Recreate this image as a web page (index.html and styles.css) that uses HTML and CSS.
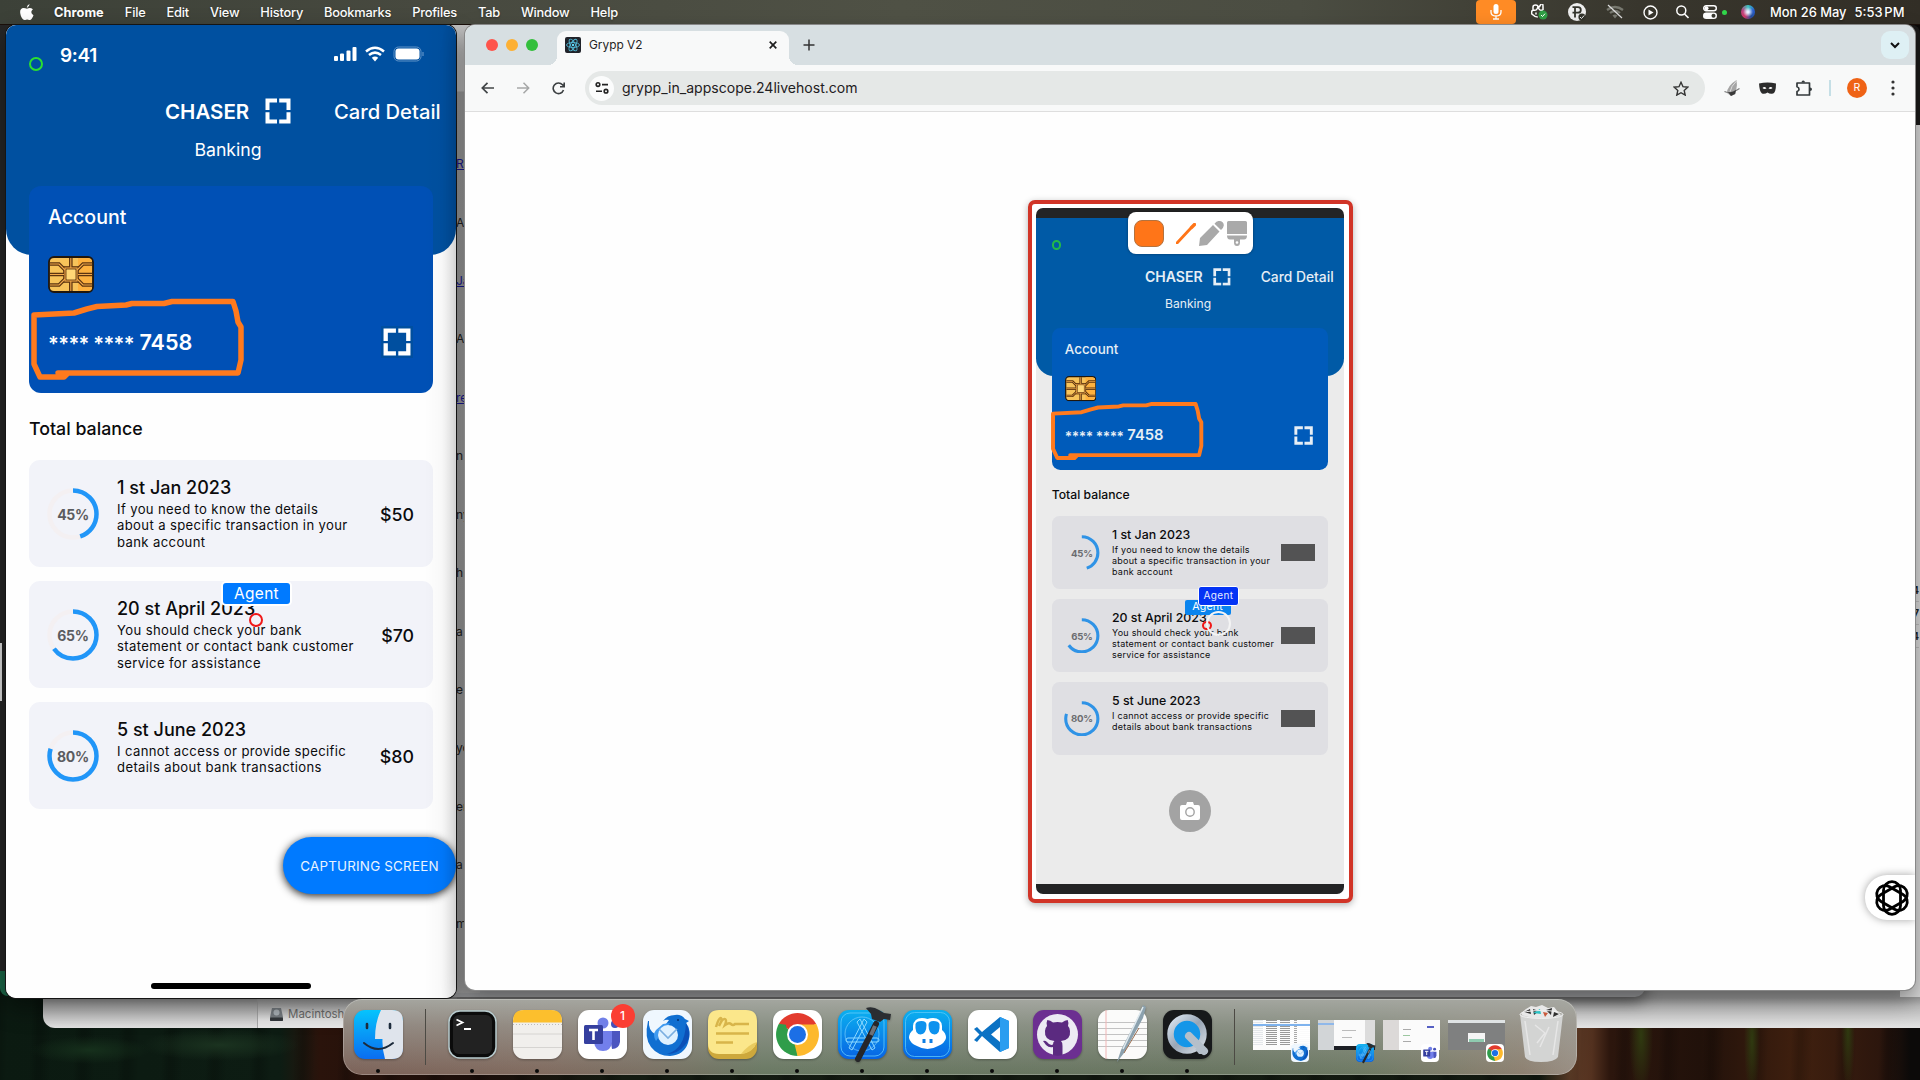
FILE: index.html
```html
<!DOCTYPE html>
<html lang="en">
<head>
<meta charset="utf-8">
<title>Desktop</title>
<link rel="stylesheet" href="styles.css">
</head>
<body>
<svg class="defs" aria-hidden="true">
  <linearGradient id="gFace" x1="0" y1="0" x2="0" y2="1"><stop offset="0" stop-color="#06c4fd"/><stop offset="1" stop-color="#0a6df0"/></linearGradient>
  <linearGradient id="gSteel" x1="0" y1="0" x2="1" y2="1"><stop offset="0" stop-color="#dde7f2"/><stop offset=".5" stop-color="#98a5b5"/><stop offset="1" stop-color="#d5dce4"/></linearGradient>
  <linearGradient id="gBlue" x1="0" y1="0" x2="0" y2="1"><stop offset="0" stop-color="#0bb0ef"/><stop offset="1" stop-color="#0763e4"/></linearGradient>
  <symbol id="brackets" viewBox="0 0 26 26"><path d="M2.500 12V2.500H12M14.200 2.500h9.300V12M23.500 14.200v9.300H14.200M12 23.500H2.500V14.200" fill="none" stroke="currentColor" stroke-width="4"/></symbol>
  <symbol id="chip" viewBox="0 0 46 37">
    <rect x="1" y="1" width="44" height="35" rx="5" fill="#f7c35a" stroke="#20160c" stroke-width="1.800"/>
    <path d="M30 2h10q4 1 4 4v25q0 4-4 4H30z" fill="#fdb13f"/>
    <g fill="none" stroke="#5c3410" stroke-width="3.600"><path d="M22.800 2v10M22.800 25v10M2 8h9l6 6M44 8h-9l-6 6M2 18.500h14M44 18.500H30M2 29h9l6-6M44 29h-9l-6-6"/><rect x="17" y="12" width="12" height="13"/></g>
    <g fill="none" stroke="#f2a94a" stroke-width="1.100"><path d="M22.800 2v10M22.800 25v10M2 8h9l6 6M44 8h-9l-6 6M2 18.500h14M44 18.500H30M2 29h9l6-6M44 29h-9l-6-6"/><rect x="17" y="12" width="12" height="13"/></g>
    <rect x="18.500" y="13.500" width="9" height="10" fill="#ffd777"/>
  </symbol>
  <symbol id="scribble" viewBox="0 0 207 74"><path d="M0 12L40 10L53 6L63 3.500L92 2L98 0.500L130 0.500L138-1.500L199-1.500L202 8L204 19L207 24V57L204 70H24L33 71L30 74H6L0 61Z" fill="none" stroke="#ff7a1d" stroke-width="5.500" stroke-linejoin="round"/></symbol>
  <symbol id="xcode" viewBox="0 0 49 49">
    <rect width="49" height="49" rx="11" fill="url(#gBlue)"/><rect x="3" y="3" width="43" height="43" rx="9" fill="none" stroke="#63cbfb" stroke-width=".8"/>
    <g fill="none" stroke="#8bd8ff" stroke-width="1"><circle cx="24" cy="24" r="17" stroke-width=".6"/><path d="M26 9l-15 29 3 2 15-28zM22 9l15 29-3 2-15-28z"/><rect x="8" y="28" width="33" height="4" rx="2"/></g>
    <path d="M38 14L20 49" stroke="#252629" stroke-width="6" stroke-linecap="round"/><path d="M37 16l-4 9" stroke="#6d7278" stroke-width="4"/>
    <path d="M28-2q7-2 13 2l5 3 7 1-1 6-6-1-4 3-8-3-1-5z" fill="#2a2d31"/>
  </symbol>
  <symbol id="bird" viewBox="0 0 49 49">
    <rect width="49" height="49" rx="11" fill="#eff7fe"/>
    <path d="M5 11q-4 17 3 26t19 9q14-1 18-13 4-13-2-20l3-2-4-2q-4-5-10-4-8 0-12 6 3-2 6-1l-6 8-8 6q-7-4-6-13z" fill="#106fd1"/>
    <path d="M20 14l7-1-5 7q-5 4-9 11-4-6 0-11z" fill="#3f9af0"/><path d="M43 13q7 13-1 22-7 9-18 9 18-5 19-31z" fill="#0b50b7"/>
    <circle cx="25" cy="25" r="10" fill="#dff1ff"/><path d="M16 19l9 9 9-9" fill="none" stroke="#7aaee0" stroke-width="1.600"/>
    <circle cx="35" cy="10" r="1" fill="#012c6b"/>
  </symbol>
  <symbol id="teams" viewBox="0 0 49 49">
    <rect width="49" height="49" rx="11" fill="#fff"/><circle cx="25" cy="13" r="5.500" fill="#7180e8"/><circle cx="37" cy="14" r="4" fill="#4650b8"/>
    <path d="M31 21h11v11q-1 7-8 7z" fill="#4c56c0"/><path d="M17 21h17v11q-1 9-9 9t-9-9z" fill="#727feb"/>
    <rect x="6" y="15" width="19" height="19" rx="1.500" fill="#353f9f"/><path d="M11 20h9M15.500 20v10" stroke="#fff" stroke-width="2.600"/>
  </symbol>
  <symbol id="chrome" viewBox="0 0 49 49">
    <rect width="49" height="49" rx="11" fill="#fff"/>
    <path d="M24.500 24.500L5.900 13.800A21.500 21.500 0 0 1 43.100 13.800z" fill="#e33b2e"/><path d="M24.500 24.500L43.100 13.800A21.500 21.500 0 0 1 24.500 46z" fill="#fdb92c"/><path d="M24.500 24.500L24.500 46A21.500 21.500 0 0 1 5.900 13.800z" fill="#2f9d4a"/>
    <path d="M24.500 14.500H43.500L33.200 29.500zM33.200 29.500L24.500 46l-3-12z" fill="#fdb92c"/><path d="M15.800 29.500L5.900 13.800l7 1z" fill="#2f9d4a"/>
    <circle cx="24.500" cy="24.500" r="10.500" fill="#fff"/><circle cx="24.500" cy="24.500" r="8.500" fill="#1c6fe6"/>
  </symbol>
</svg>

<div class="desktop">
  <div class="wallpaper"></div>

  <div class="back back-finder"><div class="pathbar"><svg width="13" height="13" viewBox="0 0 13 13"><path d="M2 0h9l2 9v4H0V9z" fill="#7b8186"/><rect y="9.500" width="13" height="3.500" rx="1" fill="#34383c"/><circle cx="6.500" cy="4.500" r="3" fill="#b4bcc1"/></svg><span>Macintosh</span></div></div>
  <div class="back back-gray"></div>
  <div class="back back-left"></div>
  <div class="back back-sliver"></div>
  <div class="back back-mid">
    <span class="lnk">Ri</span><span>Ar</span><span class="lnk">Ja</span><span>Ar</span><span class="lnk">re</span><span>n</span><span>ny</span><span>h</span><span>a</span><span>e</span><span>yo</span><span>er</span><span>a</span><span>m</span>
  </div>
  <div class="back back-right"><span>4</span><span>7</span><span>4</span></div>
  <div class="back back-dark"></div>

  <header class="menubar">
    <svg class="apple" width="14" height="17" viewBox="0 0 14 17"><path d="M9.500 0q.2 2.500-2.600 3.900Q6.700 1.300 9.500 0zM7 4.800q3-1.800 5.900.4-3.500 3 .6 6.100-2 5.500-4.300 4.600-2.200-1-4 0Q2.800 16.500.9 12-1.500 4.500 3.600 4q1.500 0 3.400.8z" fill="#fff"/></svg>
    <nav class="menus"><b>Chrome</b><span>File</span><span>Edit</span><span>View</span><span>History</span><span>Bookmarks</span><span>Profiles</span><span>Tab</span><span>Window</span><span>Help</span></nav>
    <div class="tray">
      <div class="mic"><svg width="12" height="16" viewBox="0 0 12 16"><rect x="3.500" y="0" width="5" height="10" rx="2.500" fill="#fff"/><path d="M1 6v2q0 4 5 4t5-4V6M6 12v3M3 15h6" fill="none" stroke="#fff" stroke-width="1.300"/></svg></div>
      <svg class="t1" width="17" height="16" viewBox="0 0 17 16"><path d="M2 6V3q0-2 2.500-2T7 3t2.500-2T12 3v3M2 6Q0 7 .8 10q3 3 6 3M2 6q3 1 4-1l1-2 1 2q1 2 4 1M5 8.500v2" fill="none" stroke="#fff" stroke-width="1.500"/><circle cx="12" cy="11" r="4.500" fill="#2f9e44"/><path d="M10 11l1.500 1.500L14 9.700" stroke="#fff" fill="none"/></svg>
      <svg class="t2" width="18" height="18" viewBox="0 0 18 18"><circle cx="9" cy="9" r="9" fill="#eee"/><path d="M7 14.500V4.200h3q2.800 0 2.800 2.700T10 9.600H4.500M4.500 4.200H7" fill="none" stroke="#33342c" stroke-width="1.800"/><circle cx="14" cy="14" r="3.600" fill="#33342c"/><path d="M12 14l1.500 1.500 2.700-3" stroke="#eee" fill="none"/></svg>
      <svg class="t3" width="18" height="16" viewBox="0 0 18 16"><path d="M1 6q8-6 16 0M4 9q5-4 10 0" fill="none" stroke="#77786f" stroke-width="2.200"/><path d="M6.500 11.500q2.500-2 5 0L9 14.500z" fill="#77786f"/><path d="M2 1l14 13" stroke="#ddd" stroke-width="1.200"/></svg>
      <svg class="t4" width="15" height="15" viewBox="0 0 15 15"><circle cx="7.500" cy="7.500" r="6.500" fill="none" stroke="#fff" stroke-width="1.400"/><path d="M5.500 4.500v6l5-3z" fill="#fff"/></svg>
      <svg class="t5" width="13" height="14" viewBox="0 0 13 14"><circle cx="5.300" cy="5.500" r="4.500" fill="none" stroke="#fff" stroke-width="1.500"/><path d="M8.500 9l4 4" stroke="#fff" stroke-width="1.600"/></svg>
      <svg class="t6" width="14" height="14" viewBox="0 0 14 14"><rect x=".7" y=".7" width="12.600" height="5" rx="2.500" fill="none" stroke="#fff" stroke-width="1.400"/><circle cx="3.500" cy="3.200" r="2" fill="#fff"/><rect y="7.500" width="14" height="6.500" rx="3.200" fill="#fff"/><circle cx="10.500" cy="10.800" r="2" fill="#3a3a31"/></svg>
      <i class="live"></i><i class="siri"></i>
      <span class="clock">Mon 26 May<em>5:53<small>&#8201;</small>PM</em></span>
    </div>
  </header>

  <section class="win phone">
    <div class="app">
      <div class="hero">
        <div class="status"><i class="greenring"></i><b>9:41</b>
          <svg width="90" height="17" viewBox="0 0 90 17"><g fill="#fff"><rect x="0" y="10" width="4" height="5" rx="1"/><rect x="6" y="7.500" width="4" height="7.500" rx="1"/><rect x="12.500" y="4.500" width="4" height="10.500" rx="1"/><rect x="18.500" y="1" width="4" height="14" rx="1"/><path d="M41 15.500l-3.200-3.800q3.200-2.600 6.400 0z"/></g><path d="M32 5.500q9-7.500 18 0M35 9q6-4.800 12 0" fill="none" stroke="#fff" stroke-width="2.500"/><rect x="60" y="1" width="27" height="14" rx="4.500" fill="none" stroke="#5f93c8" stroke-width="1"/><rect x="61.500" y="2.500" width="24" height="11" rx="3" fill="#fff"/><path d="M89 6v4" stroke="#5f93c8" stroke-width="1.200"/></svg>
        </div>
        <div class="titlebar"><b>CHASER</b><svg class="br"><use href="#brackets"/></svg><span>Card Detail</span></div>
        <div class="sub">Banking</div>
      </div>
      <div class="account">
        <div class="acc">Account</div>
        <svg class="chip"><use href="#chip"/></svg>
        <div class="num"><b><u>**** ****</u> 7458</b><span class="brbox"><svg><use href="#brackets"/></svg></span></div>
      </div>
      <h2>Total balance</h2>
      <div class="tx"><div class="ring"><svg viewBox="0 0 52 52"><circle class="trk" cx="26" cy="26" r="23.500"/><circle class="arc" cx="26" cy="26" r="23.500" pathLength="100" stroke-dasharray="45 100"/></svg><span>45%</span></div><div class="txt"><h3>1 st Jan 2023</h3><p>If you need to know the details<br>about a specific transaction in your<br>bank account</p></div><div class="amt">$50</div></div>
      <div class="tx"><div class="ring"><svg viewBox="0 0 52 52"><circle class="trk" cx="26" cy="26" r="23.500"/><circle class="arc" cx="26" cy="26" r="23.500" pathLength="100" stroke-dasharray="65 100"/></svg><span>65%</span></div><div class="txt"><h3>20 st April 2023</h3><p>You should check your bank<br>statement or contact bank customer<br>service for assistance</p></div><div class="amt">$70</div></div>
      <div class="tx"><div class="ring"><svg viewBox="0 0 52 52"><circle class="trk" cx="26" cy="26" r="23.500"/><circle class="arc" cx="26" cy="26" r="23.500" pathLength="100" stroke-dasharray="80 100"/></svg><span>80%</span></div><div class="txt"><h3>5 st June 2023</h3><p>I cannot access or provide specific<br>details about bank transactions</p></div><div class="amt">$80</div></div>
      <svg class="scribble"><use href="#scribble"/></svg>
      <div class="agent">Agent</div><i class="redring"></i>
      <button class="capture">CAPTURING SCREEN</button>
      <i class="home"></i>
    </div>
    <i class="shade"></i>
  </section>

  <section class="win browser">
    <div class="tabs">
      <div class="lights"><i></i><i></i><i></i></div>
      <div class="tab">
        <svg width="16" height="16" viewBox="0 0 16 16"><rect width="16" height="16" rx="2" fill="#20232a"/><g fill="none" stroke="#53b9d6" stroke-width=".9"><ellipse cx="8" cy="8" rx="6.500" ry="2.500"/><ellipse cx="8" cy="8" rx="6.500" ry="2.500" transform="rotate(60 8 8)"/><ellipse cx="8" cy="8" rx="6.500" ry="2.500" transform="rotate(120 8 8)"/></g><circle cx="8" cy="8" r="1.200" fill="#61dafb"/></svg>
        <span>Grypp V2</span>
        <svg class="x" width="8" height="8" viewBox="0 0 8 8"><path d="M.7.7l6.600 6.600M7.300.7L.7 7.300" stroke="#1f1f1f" stroke-width="1.700"/></svg>
      </div>
      <svg class="plus" width="12" height="12" viewBox="0 0 12 12"><path d="M6 .5v11M.5 6h11" stroke="#333" stroke-width="1.500"/></svg>
      <div class="chev"><svg width="10" height="7" viewBox="0 0 10 7"><path d="M1 1l4 4 4-4" fill="none" stroke="#111" stroke-width="2"/></svg></div>
    </div>
    <div class="tools">
      <svg class="back-b" width="13" height="12" viewBox="0 0 13 12"><path d="M6.500.8L1.300 6l5.200 5.200M1.300 6H13" fill="none" stroke="#414547" stroke-width="1.700"/></svg>
      <svg class="fwd" width="13" height="12" viewBox="0 0 13 12"><path d="M6.500.8L11.700 6l-5.200 5.200M11.700 6H0" fill="none" stroke="#a6a8a8" stroke-width="1.500"/></svg>
      <svg class="rel" width="13" height="13" viewBox="0 0 13 13"><path d="M11.500 8A5.300 5.300 0 1 1 10.500 2.800L12 4.500M12.200.5v4.300H8" fill="none" stroke="#3b3f41" stroke-width="1.600"/></svg>
      <div class="omni"><i><svg width="14" height="12" viewBox="0 0 14 12"><g fill="none" stroke="#222" stroke-width="1.600"><circle cx="3" cy="2.600" r="1.800"/><path d="M7 2.600h6M1 9.200h6"/><circle cx="11" cy="9.200" r="1.800"/></g></svg></i><span>grypp_in_appscope.24livehost.com</span>
        <svg class="star" width="16" height="15" viewBox="0 0 16 15"><path d="M8 1.300l2 4.400 4.800.5-3.600 3.200 1 4.700L8 11.700 3.800 14.100l1-4.700L1.200 6.200 6 5.700z" fill="none" stroke="#333" stroke-width="1.400"/></svg></div>
      <svg class="e1" width="16" height="16" viewBox="0 0 16 16"><path d="M12.500 0q.8 5 0 8l-1 6-4.500 2-4-3Q3 6 12.500 0z" fill="#a5a5a5"/><path d="M12.500 1Q7 6 6 12" stroke="#ddd" fill="none"/><path d="M.5 11.500q6 3 15-3" stroke="#777" stroke-width="1.200" fill="none"/><path d="M4 12q4 1 8-2l-1 4-4 2z" fill="#3a3a3a"/></svg>
      <svg class="e2" width="17" height="12" viewBox="0 0 17 12"><path d="M0 1.500q8.500-2 17 0 0 9-3 10-3 .800-5.500-1-2.500 1.800-5.500 1Q.5 10 0 1.500z" fill="#2c2c2c"/><path d="M3.500 6q2-2 4 .5-2.500 1-4-.5zM13.500 6q-2-2-4 .5 2.500 1 4-.5z" fill="#fff"/></svg>
      <svg class="e3" width="16" height="17" viewBox="0 0 16 17"><path d="M1 3h12.500v12H1v-3.500q2-.5 2-2.300T1 6.800z" fill="none" stroke="#33393b" stroke-width="1.700" stroke-linejoin="round"/><path d="M5.500 2.500q0-2 1.700-2t1.800 2zM14 7.500q2 0 2 1.700t-2 1.800z" fill="#33393b"/></svg>
      <i class="vsep"></i><div class="avatar">R</div>
      <svg class="dots" width="4" height="16" viewBox="0 0 4 16" fill="#333"><circle cx="2" cy="2" r="1.600"/><circle cx="2" cy="8" r="1.600"/><circle cx="2" cy="14" r="1.600"/></svg>
    </div>
    <div class="page">
      <div class="frame"><div class="screen">
        <div class="app mirror">
          <div class="hero">
            <div class="status"><i class="greenring"></i></div>
            <div class="titlebar"><b>CHASER</b><svg class="br"><use href="#brackets"/></svg><span>Card Detail</span></div>
            <div class="sub">Banking</div>
          </div>
          <div class="account">
            <div class="acc">Account</div>
            <svg class="chip"><use href="#chip"/></svg>
            <div class="num"><b><u>**** ****</u> 7458</b><span class="brbox"><svg><use href="#brackets"/></svg></span></div>
          </div>
          <h2>Total balance</h2>
          <div class="tx"><div class="ring"><svg viewBox="0 0 52 52"><circle class="arc" cx="26" cy="26" r="23.500" pathLength="100" stroke-dasharray="45 100"/></svg><span>45%</span></div><div class="txt"><h3>1 st Jan 2023</h3><p>If you need to know the details<br>about a specific transaction in your<br>bank account</p></div><div class="mask"></div></div>
          <div class="tx"><div class="ring"><svg viewBox="0 0 52 52"><circle class="arc" cx="26" cy="26" r="23.500" pathLength="100" stroke-dasharray="65 100"/></svg><span>65%</span></div><div class="txt"><h3>20 st April 2023</h3><p>You should check your bank<br>statement or contact bank customer<br>service for assistance</p></div><div class="mask"></div></div>
          <div class="tx"><div class="ring"><svg viewBox="0 0 52 52"><circle class="arc" cx="26" cy="26" r="23.500" pathLength="100" stroke-dasharray="80 100"/></svg><span>80%</span></div><div class="txt"><h3>5 st June 2023</h3><p>I cannot access or provide specific<br>details about bank transactions</p></div><div class="mask"></div></div>
          <svg class="scribble"><use href="#scribble"/></svg>
          <div class="agent">Agent</div><i class="redring"></i>
        </div>
        <div class="draw">
          <i class="swatch"></i>
          <svg width="20" height="21" viewBox="0 0 20 21"><path d="M1 20L14.500 5.500" stroke="#ff7518" stroke-width="2.800" stroke-linecap="round"/><path d="M15.500 4.500l3-3" stroke="#ff7518" stroke-width="3.400" stroke-linecap="round"/></svg>
          <svg width="25" height="25" viewBox="0 0 25 25"><path d="M0 25l1-8L14 4l6.500 6.500L8 24zM15.500 2.700Q18-.5 21 0q4 1 3.800 4.500-.3 2.500-2.800 4.500z" fill="#a9a9a9"/></svg>
          <svg width="20" height="25" viewBox="0 0 20 25"><path d="M1.500 0h17q1.500 0 1.500 1.500V13H0V1.500Q0 0 1.500 0zM0 14.500h20q0 4-3 4h-4v3q0 3.500-3 3.500t-3-3.500v-3H3q-3 0-3-4z" fill="#a9a9a9"/><circle cx="10" cy="21.500" r="1.300" fill="#fff"/></svg>
        </div>
        <i class="cursor"></i><div class="tag">Agent</div>
        <div class="camera"><svg width="20" height="18" viewBox="0 0 20 18"><path d="M2 3h4l1-3h6l1 3h4q2 0 2 2v11q0 2-2 2H2q-2 0-2-2V5q0-2 2-2z" fill="#fff"/><circle cx="10" cy="10" r="4.200" fill="none" stroke="#a3a3a3" stroke-width="1.400"/></svg></div>
      </div></div>
      <div class="widget"><svg width="36" height="36" viewBox="-18 -18 36 36" fill="none" stroke="#000" stroke-width="2.800"><rect x="-8.500" y="-16.300" width="17" height="32.600" rx="8.500"/><rect x="-8.500" y="-16.300" width="17" height="32.600" rx="8.500" transform="rotate(60)"/><rect x="-8.500" y="-16.300" width="17" height="32.600" rx="8.500" transform="rotate(120)"/></svg></div>
    </div>
  </section>

  <footer class="dock">
    <div class="slot"><svg viewBox="0 0 49 49"><rect width="49" height="49" rx="11" fill="url(#gFace)"/><path d="M27 0h11q11 0 11 11v27q0 11-11 11h-7q-3-10-2.500-20H21Q21 12 27 0z" fill="#dfe4ec"/><path d="M13 14v4M36 14v4" stroke="#1d2b3c" stroke-width="2.600" stroke-linecap="round"/><path d="M10 33q14 12 29 0" fill="none" stroke="#1d2b3c" stroke-width="2" stroke-linecap="round"/></svg></div>
    <i class="dsep"></i>
    <div class="slot"><svg viewBox="0 0 49 49"><rect x="1" y="1" width="47" height="47" rx="11" fill="#0b0b0b" stroke="#b9cdd0" stroke-width="1.500"/><rect x="5" y="5" width="39" height="39" rx="6" fill="#222"/><path d="M8.500 9.500l6 3-6 3M16 19h7" fill="none" stroke="#fff" stroke-width="1.800"/></svg></div>
    <div class="slot"><svg viewBox="0 0 49 49"><rect width="49" height="49" rx="11" fill="#f1efec"/><path d="M0 12.500V11Q0 0 11 0h27q11 0 11 11v1.500z" fill="#fcbf2d"/><path d="M0 24h49M0 37.500h49" stroke="#d6d4d1"/><path d="M0 14.500h49" stroke="#bbb" stroke-dasharray="1 2"/></svg></div>
    <div class="slot"><svg viewBox="0 0 49 49"><use href="#teams"/></svg><b class="badge">1</b></div>
    <div class="slot"><svg viewBox="0 0 49 49"><use href="#bird"/></svg></div>
    <div class="slot"><svg viewBox="0 0 49 49"><rect y="1" width="49" height="48" rx="11" fill="#cda83c"/><path d="M0 11Q0 0 11 0h27q11 0 11 11v21q-4 10-16 12H11Q0 44 0 33z" fill="#fbe78b"/><path d="M49 32q-8 2-16 12 12-1 16-12z" fill="#e9cb5f"/><path d="M8 17q3-10 5-9t-2 8q4-8 6-7t0 6q4-3 6-1t4 0h14M8 23.500h33M8 32.500h17" fill="none" stroke="#d8b54a" stroke-width="2.500"/></svg></div>
    <div class="slot"><svg viewBox="0 0 49 49"><use href="#chrome"/></svg></div>
    <div class="slot"><svg viewBox="0 0 49 49"><use href="#xcode"/></svg></div>
    <div class="slot"><svg viewBox="0 0 49 49"><rect width="49" height="49" rx="11" fill="url(#gBlue)"/><rect x="2.500" y="2.500" width="44" height="44" rx="9" fill="none" stroke="#5cc8f8" stroke-width=".8"/><path d="M10 20v-4q1-8 9-8 3 0 5.500 1Q27 8 30 8q8 0 9 8v4q4 3 4 8-1 5-8 8-5 3-10.500 3T14 36q-7-3-8-8 0-5 4-8z" fill="#fff"/><path d="M12.500 14q1-3 6-3 5 0 5 4 0 9-6 9.500-6-.5-5-10.500zM36.500 14q-1-3-6-3-5 0-5 4 0 9 6 9.500 6-.5 5-10.500z" fill="#0d92ee"/><path d="M21 29v4M28 29v4" stroke="#0e7ee4" stroke-width="3"/></svg></div>
    <div class="slot"><svg viewBox="0 0 49 49"><rect width="49" height="49" rx="11" fill="#fff"/><path d="M32 7l9 4v27l-9 4L14 26l-5 6-3-2 5.500-5.500L6 19l3-2 5 5z" fill="#0b72c4"/><path d="M32 7l9 4v27l-9 4z" fill="#2a9df0"/><path d="M32 17v15l-9-7.500z" fill="#fff"/></svg></div>
    <div class="slot"><svg viewBox="0 0 49 49"><rect width="49" height="49" rx="11" fill="#6c2f91"/><circle cx="24.500" cy="24.500" r="20.500" fill="#eceaf3"/><path d="M20 45v-8q-4 1-7-2l-3-4q2-1 4 1 3 4 6 2.500 0-3 1.500-3.500Q11 30 12 21q0-3 2-5-1-3 .3-6 3 0 5.700 2.500 4.500-1 9 0Q32 10 34.700 10q1.300 3 .3 6 2 2 2 5 1 9-9 10 2 2 1.500 5v9q-5 1.500-9.500 0z" fill="#5b2a80"/></svg></div>
    <div class="slot"><svg viewBox="0 0 49 49"><rect width="49" height="49" rx="11" fill="#fbfbfa"/><path d="M0 12.500h49M0 18.500h49M0 24.500h49M0 30.500h49M0 36.500h49" stroke="#c3c3c3"/><path d="M8 0v49" stroke="#f0b5b5"/><path d="M45-5l3 2-3 11L26 43l-7 9 4-12L41 5z" fill="#8ba1ae"/><path d="M45-3L25 39" stroke="#dfe9ee" stroke-width="1.500"/><path d="M41 18L26 43" stroke="#9b6f51"/></svg></div>
    <div class="slot"><svg viewBox="0 0 49 49"><rect width="49" height="49" rx="11" fill="#17191b"/><circle cx="24" cy="24" r="16.500" fill="#1596e8" stroke="url(#gSteel)" stroke-width="6.500"/><path d="M26 26l15 15" stroke="#b5bfca" stroke-width="8" stroke-linecap="round"/><path d="M32 39h12v5H36z" fill="#b5bfca"/></svg></div>
    <i class="dsep"></i>
    <div class="thumbs">
      <div class="thumb mail"><svg viewBox="0 0 49 49"><use href="#bird"/></svg></div>
      <div class="thumb code"><svg viewBox="0 0 49 49"><use href="#xcode"/></svg></div>
      <div class="thumb chat"><svg viewBox="0 0 49 49"><use href="#teams"/></svg></div>
      <div class="thumb web"><svg viewBox="0 0 49 49"><use href="#chrome"/></svg></div>
    </div>
    <svg class="trash" width="45" height="57" viewBox="0 0 45 57"><path d="M2 8l5-4 5-3 5 1 6-2 6 3 6-1 4 5 3 3-5 5H6z" fill="#e8e8e8"/><path d="M5 7l6-3 1 5zM14 4l6 2-5 4zM27 5l6-2-1 7zM35 7l5 2-6 3z" fill="#303030"/><path d="M14 8l7-4 1 5z" fill="#2cc3c5"/><path d="M24 7l5 1-3 4z" fill="#c95a3c"/><path d="M1 9q21 9 43 0l-5 43q-3 5-17 5T6 52z" fill="#d3d4d3"/><path d="M6 16l5 34M39 16l-5 34M16 20l10 8-8 10M30 22l-9 20" stroke="#e6e6e6" fill="none" stroke-width="1.500"/><ellipse cx="22.500" cy="9.500" rx="21.500" ry="4" fill="none" stroke="#efefef"/></svg>
  </footer>
</div>
</body>
</html>
```
FILE: styles.css
```css
* { box-sizing: border-box; margin: 0; padding: 0; }
body { width: 1920px; height: 1080px; overflow: hidden; font-family: Inter, "Liberation Sans", sans-serif; }
i, em, u { font-style: normal; text-decoration: none; }
svg { display: block; flex: none; }
.defs { position: absolute; width: 0; height: 0; }
.desktop { position: relative; width: 1920px; height: 1080px; overflow: hidden; background: #14100c; }
.wallpaper {
  position: absolute; inset: 0;
  background:
    radial-gradient(ellipse 60px 14px at 90px 1050px, #16301c, transparent),
    radial-gradient(ellipse 80px 16px at 220px 1045px, #1b3320, transparent),
    radial-gradient(ellipse 12px 60px at 1641px 1035px, #2f3a10, transparent),
    radial-gradient(ellipse 8px 60px at 1752px 1040px, #2f3a10, transparent),
    radial-gradient(ellipse 7px 60px at 1848px 1030px, #2f3a10, transparent),
    repeating-linear-gradient(92deg, transparent 0 22px, rgba(0,0,0,.2) 30px 33px, transparent 44px),
    linear-gradient(90deg, #0b1a11 0, #0d1c13 280px, #2a130b 320px, #1b0e0a 480px, #141b12 620px, #121910 1540px, #6d432b 1580px, #2c160d 1610px, #21110a 1700px, #40200f 1800px, #2c160d 1880px, #0c0a09 1910px);
}

/* windows stacked behind the two front ones */
.back { position: absolute; }
.back-finder { left: 43px; top: 990px; width: 1877px; height: 38px; border-radius: 0 0 0 12px; background: linear-gradient(#9b9b9b 8px, #b9b9b9 16px, #e3e3e3); overflow: hidden; display: flex; padding-left: 214px; }
.pathbar { border-left: 1px solid #aaa; width: 200px; display: flex; align-items: center; gap: 5px; padding: 10px 0 0 12px; font-size: 11.500px; color: #6e6e6e; background: linear-gradient(#aaa 10px, #e9e9e9 30px); }
.back-gray { left: 440px; top: 900px; width: 1205px; height: 97px; border-radius: 0 0 10px 10px; background: #9a9b9d; box-shadow: 0 4px 16px rgba(0,0,0,.5); }
.back-left { left: 0; top: 25px; width: 20px; height: 971px; background: linear-gradient(#262626 946px, #1b6647 946px); border-radius: 0 0 0 8px; }
.back-sliver { left: 0; top: 643px; width: 2px; height: 58px; background: #ddd; }
.back-mid { left: 440px; top: 25px; width: 40px; height: 968px; background: linear-gradient(#c4c4c4 66px, #a5a5a5 67px, #aaa 400px, #a2a2a2); font-size: 12px; color: #222; display: flex; flex-direction: column; justify-content: space-around; padding: 110px 0 40px 16px; line-height: 20px; }
.back-mid .lnk { color: #1a1a9c; text-decoration: underline; }
.back-right { left: 1900px; top: 125px; width: 20px; height: 872px; background: #d8d8d8; padding: 454px 1px 0 0; text-align: right; font: bold 10px/23px Inter, sans-serif; color: #222; }
.back-right span { display: block; border-bottom: 1px solid #bbb; height: 23px; }
.back-dark { left: 1890px; top: 25px; width: 30px; height: 100px; background: #1b1a19; border-top-right-radius: 8px; }

.menubar { position: absolute; inset: 0 0 auto 0; height: 24px; display: flex; align-items: center; background: linear-gradient(90deg, #3c4138, #47493f 420px, #4f5145 900px, #4b4d42 1300px, #38362d 1640px, #322e26); color: #fff; padding-left: 20px; font-size: 12.800px; font-weight: 500; text-shadow: 0 1px 2px rgba(0,0,0,.4); box-shadow: 0 1px 0 #1a0f0a; }
.apple { margin-right: 20px; }
.menus { display: flex; gap: 21px; letter-spacing: -.2px; white-space: nowrap; }
.menus b { font-weight: 700; letter-spacing: .05px; }
.tray { margin-left: auto; width: 444px; height: 24px; display: flex; align-items: center; }
.mic { width: 40px; height: 24px; background: #ff8b25; border-radius: 4px; display: grid; place-items: center; margin-right: 15px; }
.t1 { margin-right: 20px; } .t2 { margin-right: 20px; } .t3 { margin-right: 19px; } .t4 { margin-right: 18px; } .t5 { margin-right: 14px; } .t6 { margin-right: 5px; }
.live { width: 5px; height: 5px; border-radius: 50%; background: #32d74b; margin-right: 14px; }
.siri { width: 14px; height: 14px; border-radius: 50%; background: radial-gradient(circle, #e8f0ff 1px, transparent 5px), conic-gradient(#3cc6c0, #2a5fd0, #2450a0, #d33a6c, #b7447f, #3cc6c0); margin-right: 15px; }
.clock { display: flex; gap: 8px; white-space: nowrap; font-size: 12.900px; }

.win { position: absolute; overflow: hidden; }
.phone { left: 6px; top: 25px; width: 450px; height: 973px; border-radius: 10px; background: #fefefe; box-shadow: 0 0 0 1px #151515, 0 10px 24px rgba(0,0,0,.45); }
.shade { position: absolute; inset: 0; pointer-events: none; background: linear-gradient(90deg, transparent 418px, rgba(0,0,0,.025) 436px, rgba(0,0,0,.1)); }

/* banking app, laid out at 450px wide; the mirrored copy is zoomed */
.app { position: relative; width: 450px; height: 973px; overflow: hidden; background: #fefefe; color: #0b0b0d; }
.hero { height: 230px; background: #0050a0; border-radius: 0 0 26px 26px; color: #fff; padding-top: 17px; }
.status { height: 26px; display: flex; align-items: center; padding-left: 23px; font-size: 19px; }
.status b { font-weight: 600; margin-left: 17px; width: 274px; letter-spacing: -.3px; }
.status svg { margin-top: -2px; }
.greenring { width: 14px; height: 14px; border: 2px solid #2be02f; border-radius: 50%; margin-top: 18px; }
.titlebar { height: 30px; margin-top: 28px; display: flex; align-items: center; padding-left: 159px; font-size: 20.200px; font-weight: 500; white-space: nowrap; }
.titlebar b { font-weight: 600; width: 100px; font-size: 20.500px; letter-spacing: 0; }
.br { width: 26px; height: 26px; margin-right: 43px; }
.sub { margin-top: 11px; height: 26px; line-height: 26px; font-size: 17.700px; text-align: center; padding-right: 6px; }
.account { width: 404px; height: 207px; margin: -70px 0 0 23px; position: relative; top: 1px; margin-bottom: 1px; background: #0050b5; border-radius: 12px; color: #fff; padding: 18px 19px 0; }
.acc { height: 26px; line-height: 26px; font-size: 19.600px; font-weight: 500; }
.chip { width: 46px; height: 37px; margin-top: 26px; }
.num { display: flex; align-items: center; height: 40px; margin-top: 29px; font-size: 21.600px; white-space: nowrap; }
.num b { font-weight: 600; }
.num u { font-size: 20px; letter-spacing: -.6px; position: relative; top: 1px; }
.brbox { margin-left: auto; background: #004f9f; padding: 2px; margin-right: 1px; }
.brbox svg { width: 28px; height: 28px; }
.app h2 { margin: 23px 0 17px 23px; height: 28px; line-height: 28px; font-size: 17.800px; font-weight: 500; }
.tx { width: 404px; height: 107px; margin: 0 0 14px 23px; border-radius: 11px; background: #f2f3f9; display: flex; align-items: center; padding: 0 19px 0 18px; }
.ring { width: 52px; height: 52px; display: grid; place-items: center; color: #5b5c60; font-size: 14px; font-weight: 700; }
.ring svg, .ring span { grid-area: 1 / 1; }
.ring span { letter-spacing: -.3px; padding-top: 2px; }
.ring svg { width: 52px; height: 52px; }
.ring circle { fill: none; stroke-width: 4.500; transform: rotate(-90deg); transform-origin: 26px 26px; }
.trk { stroke: #f4f0f2; } .arc { stroke: #2196f8; }
.txt { align-self: flex-start; padding: 16px 0 0 18px; white-space: nowrap; }
.txt h3 { height: 25px; line-height: 24px; font-size: 18px; font-weight: 500; }
.txt p { font-size: 13.100px; line-height: 16.300px; letter-spacing: .37px; }
.amt { margin-left: auto; font-size: 17.800px; font-weight: 500; padding-top: 1px; }
.scribble { position: absolute; left: 28px; top: 278px; width: 207px; height: 74px; overflow: visible; }
.scribble use, #scribble { overflow: visible; }
.agent { position: absolute; left: 217px; top: 558px; width: 67px; height: 21px; box-shadow: 0 0 0 2px #fff; border-radius: 3px; background: #007aff; color: #fff; font-size: 15.500px; line-height: 21px; text-align: center; letter-spacing: .3px; }
.redring { position: absolute; left: 243px; top: 588px; width: 14px; height: 14px; border: 2px solid #f01818; border-radius: 50%; }
.capture { position: absolute; left: 277px; top: 812px; width: 173px; height: 57px; border: 0; border-radius: 29px; background: #007aff; color: #eaf4ff; font: 400 13.400px Inter, sans-serif; letter-spacing: .2px; white-space: nowrap; box-shadow: 0 2px 8px rgba(0,0,0,.85); }
.home { position: absolute; left: 145px; top: 958px; width: 160px; height: 6px; border-radius: 3px; background: #000; }

.browser { left: 465px; top: 25px; width: 1450px; height: 965px; border-radius: 10px; background: #fefefe; box-shadow: 0 0 0 1px #888, 0 10px 22px rgba(0,0,0,.4); display: flex; flex-direction: column; }
.tabs { height: 40px; background: #d7dfe2; display: flex; padding: 6px 6px 0 21px; flex: none; }
.lights { display: flex; gap: 8px; padding-top: 8px; margin-right: 19px; }
.lights i { width: 12px; height: 12px; border-radius: 50%; background: #fe544b; }
.lights i:nth-child(2) { background: #fdb033; } .lights i:nth-child(3) { background: #33bf3c; }
.tab { position: relative; width: 232px; height: 34px; background: #f8f9f9; border-radius: 9px 9px 0 0; display: flex; align-items: flex-start; padding: 6px 12px 0 8px; font-size: 11.900px; line-height: 16px; color: #1f1f1f; }
.tab::before, .tab::after { content: ""; position: absolute; bottom: 0; width: 9px; height: 9px; }
.tab::before { left: -9px; background: radial-gradient(circle at 0 0, transparent 9px, #f8f9f9 9px); }
.tab::after { right: -9px; background: radial-gradient(circle at 100% 0, transparent 9px, #f8f9f9 9px); }
.tab span { margin-left: 8px; }
.x { margin: 4px 0 0 auto; }
.plus { margin: 8px 0 0 14px; }
.chev { margin-left: auto; width: 28px; height: 28px; border-radius: 9px; background: #def0f4; display: grid; place-items: center; }
.tools { height: 47px; flex: none; background: #f8f9f9; border-bottom: 1px solid #dedede; display: flex; align-items: center; padding-left: 16px; }
.fwd { margin-left: 23px; } .rel { margin-left: 22px; }
.omni { margin: 0 24px 0 20px; width: 1120px; height: 34px; border-radius: 17px; background: #e5e8e7; display: flex; align-items: center; padding: 0 16px 0 4px; font-size: 14.060px; color: #1f2022; }
.omni span { padding-bottom: 2px; }
.omni i { width: 25px; height: 25px; border-radius: 50%; background: #fbfcfc; display: grid; place-items: center; margin-right: 8px; }
.star { margin-left: auto; }
.e1 { margin-left: -5px; } .e2 { margin-left: 19px; } .e3 { margin-left: 20px; }
.vsep { width: 2px; height: 16px; background: #c5dfe6; margin-left: 17px; }
.avatar { margin-left: 16px; width: 20px; height: 20px; border-radius: 50%; background: #ef6316; color: #fff; font-size: 10.500px; line-height: 20px; text-align: center; }
.dots { margin-left: 24px; }
.page { position: relative; flex: 1; display: flex; justify-content: center; align-items: flex-start; padding: 88px 0 0 1px; }
.frame { width: 325px; height: 703px; border: 4px solid #d13427; border-radius: 7px; background: #fff; padding: 4px; box-shadow: 0 2px 7px rgba(0,0,0,.3); }
.screen { position: relative; width: 308px; height: 686px; background: #232425; border-radius: 7px; padding: 10px 0; overflow: hidden; }
.mirror { zoom: .685; height: 972px; background: #ebebeb; }
.mirror .hero { background: #005aa6; }
.mirror .account { background: #005bba; }
.mirror .hero, .mirror .account { color: #e6eef5; }
.mirror .tx { background: #dfdfe3; }
.mirror .arc { stroke: #2f93e6; }
.mirror .ring { color: #6b6c70; }
.mirror .brbox { background: none; }
.mirror .scribble { left: 24.500px; top: 272.500px; width: 216.500px; height: 77.400px; }
.mirror .agent { box-shadow: none; background: #0a84ee; }
.mirror .greenring { border-width: 3px; border-color: #22b84a; }
.mirror .redring { border-width: 3px; }
.mask { margin-left: auto; width: 51px; height: 25px; background: #535354; }
.draw { position: absolute; left: 92px; top: 4px; width: 125px; height: 42px; border-radius: 8px; background: #fff; display: flex; align-items: center; padding-left: 6px; box-shadow: 0 0 3px rgba(0,0,0,.4); }
.swatch { width: 30px; height: 27px; border-radius: 8px; background: #ff7518; border: 1px solid #b4723e; margin-right: 12px; }
.draw svg + svg { margin-left: 3px; }
.cursor { position: absolute; left: 170px; top: 403px; width: 25px; height: 25px; border: 2px solid #f4f4f4; border-radius: 50%; }
.tag { position: absolute; left: 162px; top: 378px; width: 41px; height: 20px; border: 1.500px solid #fff; border-radius: 3px; background: #0433f5; color: #e6ecff; font-size: 10px; line-height: 17px; letter-spacing: .4px; text-align: center; }
.camera { position: absolute; left: 133px; top: 582px; width: 42px; height: 42px; border-radius: 50%; background: #a3a3a3; display: grid; place-items: center; }
.widget { position: absolute; right: 0; top: 763px; width: 50px; height: 45px; border-radius: 22px 0 0 22px; background: #fff; box-shadow: 0 0 8px rgba(0,0,0,.35); display: grid; place-items: center; padding-left: 4px; }

.dock { position: absolute; left: 343px; top: 999px; width: 1234px; height: 76px; border-radius: 19px; padding-left: 2.500px; display: flex; box-shadow: inset 0 0 0 1px rgba(255,255,255,.25);
  background: linear-gradient(rgba(167,169,163,.95), rgba(160,162,156,.6) 35%, transparent), linear-gradient(90deg, #7c6258, #806a5e 200px, #7a6f62 300px, #697862 420px, #67745f 900px, #6d7963 1020px, #8d8070 1180px, #9a8f84); }
.slot { position: relative; width: 65px; padding: 11px 8px 0; }
.slot svg { width: 49px; height: 49px; overflow: visible; filter: drop-shadow(0 1px 1px rgba(0,0,0,.3)); }
#xcode { overflow: visible; }
.slot::after { content: ""; position: absolute; left: 30.500px; top: 70px; width: 4px; height: 4px; border-radius: 50%; background: #0a0a0a; }
.dsep { width: 1px; height: 56px; background: #4c4a44; margin: 10px 14px 0; }
.badge { position: absolute; left: 41px; top: 5px; width: 24px; height: 24px; border-radius: 50%; background: #fb3e33; color: #fff; font-size: 12px; font-weight: 500; line-height: 24px; text-align: center; }
.thumbs { display: flex; gap: 8px; padding: 21px 0 0 4px; }
.thumb { position: relative; width: 57px; height: 30px; background: #f8f8f8; }
.thumb svg { position: absolute; right: 1px; bottom: -12px; width: 18px; height: 18px; overflow: visible; }
.mail { background: linear-gradient(transparent 4px, #7fb3ee 4px 6px, transparent 6px), repeating-linear-gradient(transparent 0 1px, #fbfbfb 1px 2px), linear-gradient(transparent 25px, #fbfbfb 25px), linear-gradient(90deg, #e4e7ea 10px, #fff 10px 13px, #999 13px 24px, #fff 24px 27px, #999 27px 37px, #fff 37px 41px, #aaa 41px 44px, #fff 44px); }
.code { background: linear-gradient(transparent 26px, #1d2026 26px) 16px 0 no-repeat, linear-gradient(#8fb8ea, #8fb8ea) 0 3px / 16px 2px no-repeat, linear-gradient(#bbb, #bbb) 24px 10px / 14px 1px no-repeat, linear-gradient(#bbb, #bbb) 24px 17px / 10px 1px no-repeat, linear-gradient(90deg, #d2d5d7 16px, #fafafa 16px 47px, #dcdcdc 47px); }
.chat { background: linear-gradient(#5660c4, #5660c4) 44px 6px / 7px 2px no-repeat, linear-gradient(#aaa, #aaa) 20px 9px / 8px 1px no-repeat, linear-gradient(#9cc7a0, #9cc7a0) 20px 15px / 7px 1px no-repeat, linear-gradient(#aaa, #aaa) 20px 21px / 8px 1px no-repeat, linear-gradient(90deg, #dcd9d8 16px, #fbfbfb 16px); }
.web { background: linear-gradient(#8fcbb0, #8fcbb0) 21px 19px / 15px 3px no-repeat, linear-gradient(#f5f5f5, #f5f5f5) 20px 13px / 17px 9px no-repeat, linear-gradient(#dfe3e4 3px, #7f8080 3px); }
.trash { margin: 6px 0 0 14px; }
```
